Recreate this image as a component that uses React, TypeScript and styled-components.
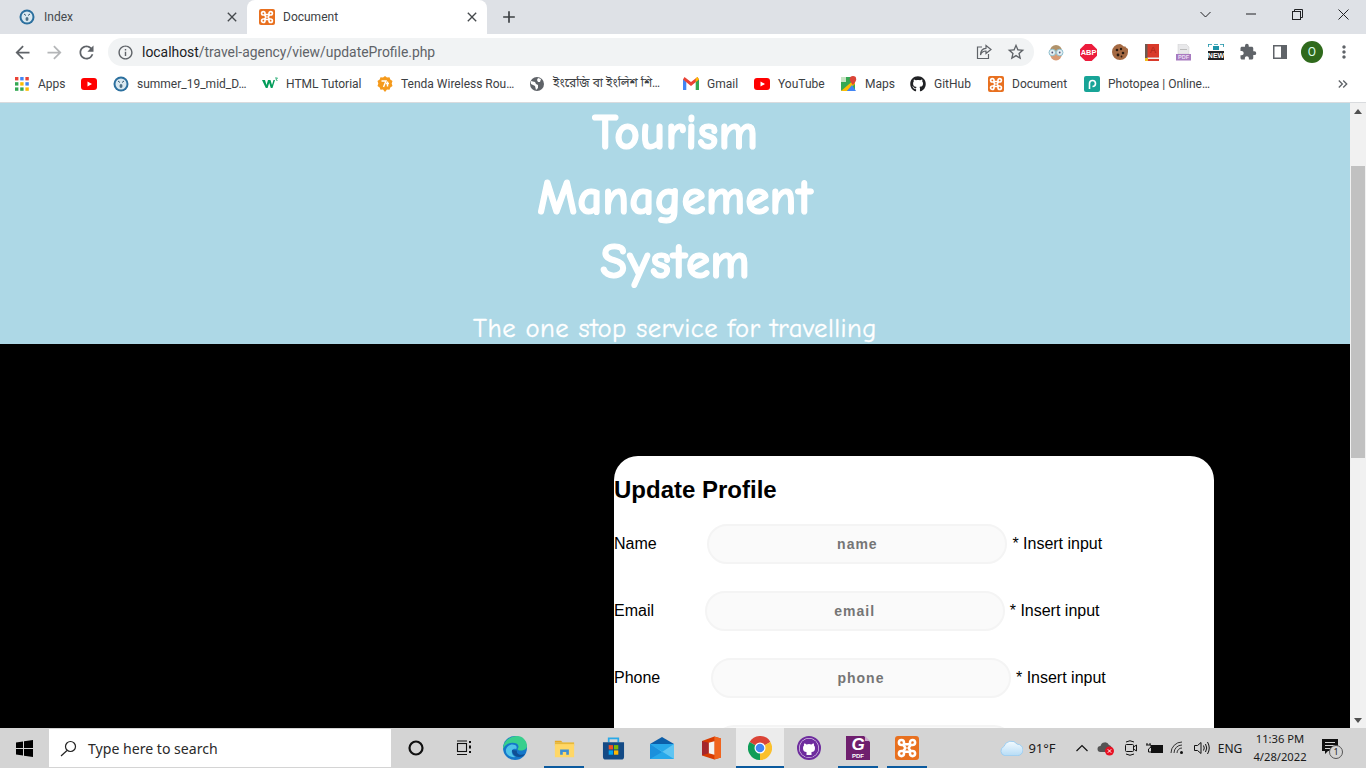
import React from "react";
import styled, { createGlobalStyle } from "styled-components";
import { MdArrowBack, MdArrowForward, MdRefresh, MdInfoOutline, MdStarBorder, MdExtension, MdClose, MdAdd, MdKeyboardDoubleArrowRight, MdMoreVert } from "react-icons/md";
import { FaGithub } from "react-icons/fa";

const UI = `Roboto, "Noto Sans", "Noto Sans Bengali", sans-serif`;
const COMIC = `"Comic Sans MS", "Comic Neue", Lato, sans-serif`;

const Global = createGlobalStyle`
  html, body { margin: 0; padding: 0; height: 100%; overflow: hidden; background: #000; }
  * { box-sizing: border-box; }
`;

const Screen = styled.div`
  width: 1366px; height: 768px; display: flex; flex-direction: column; overflow: hidden;
  font-family: ${UI};
`;

const TabStrip = styled.div`
  height: 34px; flex: none; background: #dee1e6; display: flex; align-items: stretch; padding-left: 7px;
`;
const Tab = styled.div<{ $active?: boolean }>`
  width: 240px; display: flex; align-items: center; font-size: 12px; color: ${p => p.$active ? "#3c4043" : "#45494d"};
  padding: 0 7px 0 12px; gap: ${p => p.$active ? 8 : 9}px;
  border-radius: 8px 8px 0 0; background: ${p => p.$active ? "#fff" : "transparent"};
`;
const TabTitle = styled.span`flex: 1; `;
const NewTab = styled.div`
  width: 44px; display: flex; align-items: center; justify-content: center; color: #3c4043; font-size: 20px;
`;
const WindowControls = styled.div`margin-left: auto; display: flex; padding-bottom: 6px;`;
const WindowButton = styled.div`
  width: 46px; display: flex; align-items: center; justify-content: center; color: #202124;
`;

const Toolbar = styled.div`
  height: 34px; flex: none; background: #fff; display: flex; align-items: center; padding: 2px 0 0 6px;
`;
const NavButton = styled.div<{ $off?: boolean }>`
  width: 32px; height: 32px; display: flex; align-items: center; justify-content: center; font-size: 21px;
  color: ${p => p.$off ? "#b4b6b8" : "#5f6368"};
`;
const Omnibox = styled.div`
  margin-left: 6px; margin-right: 6px; width: 926px; height: 28px; background: #f1f3f4; border-radius: 14px;
  display: flex; align-items: center; padding: 0 2px 0 9px; color: #5f6368; font-size: 13.9px;
`;
const UrlText = styled.div`
  margin-left: 8px; flex: 1; color: #5f6368; white-space: nowrap;
  b { font-weight: 400; color: #202124; }
`;
const OmniAction = styled.div`
  width: 32px; display: flex; justify-content: center; align-items: center; color: #5f6368; font-size: 20px;
`;
const ExtButton = styled.div`
  width: 32px; height: 32px; display: flex; align-items: center; justify-content: center; color: #5f6368;
`;
const Avatar = styled.div`
  width: 22px; height: 22px; border-radius: 50%; background: #2f6a1c; color: #dfe; font-size: 12px;
  display: flex; align-items: center; justify-content: center;
`;

const BookmarksBar = styled.div`
  height: 35px; flex: none; background: #fff; border-bottom: 1px solid #d9dbde; display: flex; align-items: center; padding: 0 0 3px 13px;
`;
const Bookmark = styled.div<{ $w: number }>`
  width: ${p => p.$w}px; display: flex; align-items: center; gap: 8px; font-size: 12px; color: #3c4043; white-space: nowrap; overflow: hidden;
`;
const BarOverflow = styled.div`
  margin-left: auto; width: 46px; display: flex; justify-content: center; color: #5f6368; font-size: 16px;
`;

const Viewport = styled.div`flex: 1; min-height: 0; display: flex;`;
const PageArea = styled.main`flex: 1; min-width: 0; background: #000; overflow: hidden;`;
const Banner = styled.header`
  height: 241px; background: #add8e6; color: #fff; text-align: center; font-family: ${COMIC}; overflow: hidden;
`;
const BannerTitle = styled.h1`
  margin: -2px 0 0; font-size: 49.5px; line-height: 64.5px; font-weight: 700; -webkit-text-stroke: 1.2px #fff;
`;
const BannerTag = styled.p`
  margin: 16px 0 0; font-size: 26.67px; line-height: 36px; font-weight: 400; letter-spacing: 0.5px; -webkit-text-stroke: 0.35px #fff;
`;
const Card = styled.section`
  margin: 112px 0 0 614px; width: 600px; min-height: 520px; background: #fff; border-radius: 24px 24px 0 0; font-family: "Liberation Sans", Arial, sans-serif; color: #000;
`;
const CardTitle = styled.h2`
  margin: 0; padding-top: 20px; font-size: 24px; line-height: 28px; font-weight: 700; height: 68px;
`;
const Row = styled.div<{ $indent?: number }>`
  display: flex; align-items: center; height: 40px; margin-bottom: 27px; font-size: 16px; padding-left: ${p => p.$indent ?? 0}px;
`;
const FieldLabel = styled.label`margin-right: 50.7px;`;
const Field = styled.input`
  width: 300px; height: 40px; border-radius: 20px; background: #fafafa; border: 2px solid #f4f4f4; text-align: center; outline: none; padding: 0;
  font: 700 14px "Liberation Sans", Arial, sans-serif; letter-spacing: 1px;
  &::placeholder { color: #757575; opacity: 1; }
`;
const Hint = styled.span`margin-left: 5px;`;

const Scrollbar = styled.div`
  width: 16px; flex: none; background: #f1f1f1; display: flex; flex-direction: column; align-items: center; 
`;
const ScrollArrow = styled.div`
  height: 16px; width: 16px; flex: none; display: flex; align-items: center; justify-content: center;
`;
const ScrollThumb = styled.div`
  width: 14px; height: 292px; background: #c1c1c1; margin-top: 47px; margin-bottom: auto;
`;

const Taskbar = styled.footer`
  height: 40px; flex: none; background: #d4d4d4; display: flex; align-items: stretch;
`;
const StartButton = styled.div`width: 49px; display: flex; align-items: center; justify-content: center;`;
const SearchBox = styled.div`
  width: 342px; height: 38px; margin-top: 1px; background: #fff; display: flex; align-items: center; padding-left: 11px; gap: 11px; font-size: 14.1px; color: #2a2a2a;
  font-family: "Noto Sans", sans-serif;
`;
const Pinned = styled.div`display: flex; gap: 1px; margin-left: 3px;`;
const TaskSlot = styled.div<{ $bar?: number; $active?: boolean; $ml?: number }>`
  width: 48px; position: relative; display: flex; align-items: center; justify-content: center; margin-left: ${p => p.$ml ?? 0}px;
  background: ${p => p.$active ? "#ececec" : "transparent"};
  &::after {
    content: ""; position: absolute; left: 50%; bottom: 0; height: 2px; transform: translateX(-50%);
    width: ${p => p.$bar ?? 0}px; background: #0b5a9e;
  }
`;
const Tray = styled.div`margin-left: auto; display: flex; align-items: stretch; padding-right: 15px; color: #1a1a1a;`;
const TraySlot = styled.div<{ $w: number; $size?: number }>`
  width: ${p => p.$w}px; display: flex; align-items: center; justify-content: center; font-size: ${p => p.$size ?? 12}px; font-family: "Noto Sans", sans-serif;
`;
const Clock = styled.div`
  text-align: center; font-size: 11.2px; line-height: 18.500px; font-family: "Noto Sans", sans-serif; white-space: nowrap;
`;

/* ---- drawings ---- */
const Xampp = ({ s = 16 }: { s?: number }) => (
  <svg width={s} height={s} viewBox="0 0 16 16">
    <rect width="16" height="16" rx="2" fill="#e8701f" />
    <path
      d="M6 5.500V4.300A1.700 1.700 0 1 0 4.300 6H5.500l1.500 2-1.500 2H4.300A1.700 1.700 0 1 0 6 11.700V10.500h4v1.200A1.700 1.700 0 1 0 11.700 10H10.500L9 8l1.500-2h1.200A1.700 1.700 0 1 0 10 4.300V5.500z"
      fill="none" stroke="#fff" strokeWidth="1.700" strokeLinejoin="round"
    />
  </svg>
);
const FaceGlobe = () => (
  <svg width="16" height="16" viewBox="0 0 16 16">
    <circle cx="8" cy="8" r="7.500" fill="#2b6f9e" />
    <circle cx="8" cy="8" r="5.500" fill="#d9e8f0" />
    <path d="M5 5l2 1.500M11 5L9 6.500" stroke="#33566e" strokeWidth="1" />
    <ellipse cx="8" cy="10" rx="1.500" ry="2" fill="#4f7186" />
  </svg>
);
const YouTube = () => (
  <svg width="16" height="12" viewBox="0 0 16 12">
    <rect width="16" height="12" rx="3" fill="#f00" />
    <path d="M6.500 3.500v5L11 6z" fill="#fff" />
  </svg>
);
const AppsGrid = () => {
  const c = ["#ea4335", "#4285f4", "#ea4335", "#34a853", "#fbbc04", "#4285f4", "#34a853", "#34a853", "#fbbc04"];
  return (
    <svg width="17" height="16" viewBox="0 0 17 16">
      {c.map((f, i) => <rect key={i} x={2 + (i % 3) * 5.200} y={1 + Math.floor(i / 3) * 5.200} width="3.400" height="3.400" fill={f} />)}
    </svg>
  );
};
const W3 = () => (
  <svg width="16" height="16" viewBox="0 0 16 16">
    <path d="M0 4h3l1.500 5L6 4h2.500l1.500 5 1.500-5H13l-2.500 8H8.800L7.200 7l-1.600 5H3.800z" fill="#049d5b" />
    <path d="M13 2h2.500L14 3.500q1.500.3 1 1.500" stroke="#049d5b" strokeWidth=".8" fill="none" />
  </svg>
);
const Tenda = () => (
  <svg width="16" height="16" viewBox="0 0 16 16">
    <path d="M8 0l2 1.500 2.500-.3.8 2.400 2.200 1.300-.8 2.600.8 2.600-2.200 1.300-.8 2.400-2.500-.3L8 16l-2-2.500-2.500.3-.8-2.400L.5 10.100l.8-2.600-.8-2.600 2.200-1.300.8-2.400 2.500.3z" fill="#f59a1c" />
    <path d="M4.500 5h4.500L6.500 11M9 7.500h3M10.500 5.500v5" stroke="#fff" strokeWidth="1.400" fill="none" />
  </svg>
);
const Globe = () => (
  <svg width="16" height="16" viewBox="0 0 16 16">
    <circle cx="8" cy="8" r="7" fill="#5f6368" />
    <path d="M2 5l4 1 1 2 2 1v3l-2 2-1-4-4-2zM9 2l3 1-1 3-2 0-1-2z" fill="#fff" />
  </svg>
);
const Gmail = () => (
  <svg width="16" height="13" viewBox="0 0 16 13">
    <path d="M0 2v11h3.300V4.500z" fill="#4285f4" />
    <path d="M16 2v11h-3.300V4.500z" fill="#34a853" />
    <path d="M0 2.500L1.500 0 8 5l6.500-5L16 2.500 8 9z" fill="#ea4335" />
    <path d="M12.700 1.300L14.500 0 16 2.500 12.700 5z" fill="#fbbc04" />
  </svg>
);
const Maps = () => (
  <svg width="16" height="16" viewBox="0 0 16 16">
    <rect y="1" width="14" height="14" rx="1" fill="#34a853" />
    <path d="M0 15L14 3v5L6 15z" fill="#fbbc04" />
    <path d="M6 15L11 9l4 6z" fill="#4285f4" />
    <rect y="1" width="5" height="5" fill="#c7e3c3" />
    <path d="M12 0a3.200 3.200 0 0 1 3.200 3.200C15.200 5.500 12 9 12 9S8.800 5.500 8.800 3.200A3.200 3.200 0 0 1 12 0z" fill="#db4437" />
  </svg>
);
const Photopea = () => (
  <svg width="16" height="16" viewBox="0 0 16 16">
    <rect width="16" height="16" rx="2" fill="#18a497" />
    <path d="M5.500 13V7.500a3 3 0 1 1 3 3" stroke="#fff" strokeWidth="1.600" fill="none" />
  </svg>
);
const ShareIcon = () => (
  <svg width="17" height="16" viewBox="0 0 17 16" fill="none" stroke="#5f6368" strokeWidth="1.200">
    <path d="M6 3H1.500v11.500h11V10" />
    <path d="M10 1.500l5 4-5 4V7C7.500 7 5.500 8 4.500 11c0-4 2-6.500 5.500-6.700z" />
  </svg>
);
const FaceExt = () => (
  <svg width="18" height="18" viewBox="0 0 18 18">
    <ellipse cx="9" cy="11" rx="6" ry="6.500" fill="#d99a74" />
    <path d="M3 8a6 6 0 0 1 12 0v1H3z" fill="#b0926a" />
    <circle cx="5.300" cy="9.500" r="3.300" fill="#e4eef2" stroke="#8fc0d0" />
    <circle cx="12.700" cy="9.500" r="3.300" fill="#e4eef2" stroke="#8fc0d0" />
    <circle cx="5.300" cy="9.500" r=".9" fill="#557" />
    <circle cx="12.700" cy="9.500" r=".9" fill="#557" />
  </svg>
);
const Abp = () => (
  <svg width="17" height="17" viewBox="0 0 16 16">
    <path d="M5 0h6l5 5v6l-5 5H5l-5-5V5z" fill="#ec1c3c" />
    <text x="8" y="10.800" textAnchor="middle" fontFamily="Liberation Sans" fontWeight="700" fontSize="7" fill="#fff">ABP</text>
  </svg>
);
const Cookie = () => (
  <svg width="16" height="16" viewBox="0 0 16 16">
    <path d="M8 0c1 0 1.500 1 2.500 1.200.5 1.300 2 1.500 3 1.300.3 1 1 1.500 2.500 2.500v3a8 8 0 1 1-8-8z" fill="#a56a43" />
    <g fill="#2b1a10"><circle cx="5" cy="6" r="1.300" /><circle cx="9" cy="5" r="1.200" /><circle cx="11" cy="9" r="1.300" /><circle cx="6" cy="11" r="1.400" /><circle cx="9.500" cy="12.500" r=".9" /></g>
  </svg>
);
const RedBook = () => (
  <svg width="16" height="17" viewBox="0 0 16 17">
    <rect x="1" width="14" height="17" fill="#d93a2b" />
    <rect x="1" width="2.500" height="17" fill="#6e5a50" />
    <rect x="3.500" y="13.500" width="11.500" height="1.500" fill="#eee" />
    <rect x="1" y="14" width="3" height="3" fill="#f0c020" />
    <text x="9" y="9" textAnchor="middle" fontSize="9" fontFamily="Liberation Sans" fill="#a82418">A</text>
  </svg>
);
const PdfExt = () => (
  <svg width="16" height="17" viewBox="0 0 16 17">
    <path d="M2 0h8l3 3v7H2z" fill="#e8e8ea" stroke="#ccc" strokeWidth=".5" />
    <rect x="4" y="5" width="7" height="1" fill="#bbb" />
    <rect y="10" width="15" height="6.500" fill="#a77bc0" />
    <text x="7.500" y="15.300" textAnchor="middle" fontSize="5.500" fontWeight="700" fontFamily="Liberation Sans" fill="#ecdff4">PDF</text>
  </svg>
);
const NewBadge = () => (
  <svg width="16" height="16" viewBox="0 0 16 16">
    <path d="M0 0h4M6 0h4M12 0h4M0 0v3M16 0v3" stroke="#1c93a8" strokeWidth="1.600" fill="none" />
    <rect x="5" y="2" width="6" height="4" fill="#1c93a8" />
    <rect y="7" width="16" height="9" fill="#202124" />
    <text x="8" y="14.300" textAnchor="middle" fontSize="7" fontWeight="700" fontFamily="Liberation Sans" fill="#fff">NEW</text>
  </svg>
);
const SidePanel = () => (
  <svg width="14" height="14" viewBox="0 0 14 14">
    <path fillRule="evenodd" d="M0 0h14v14H0zM1.500 1.500v11H8v-11z" fill="#5f6368" />
  </svg>
);
const Minimize = () => <svg width="10" height="10" viewBox="0 0 10 10"><path d="M0 5h10" stroke="#202124" /></svg>;
const Restore = () => (
  <svg width="11" height="11" viewBox="0 0 11 11" fill="none" stroke="#202124"><rect x=".5" y="2.500" width="8" height="8" /><path d="M2.500 2.500V.5h8v8h-2" /></svg>
);
const CloseX = () => <svg width="11" height="11" viewBox="0 0 11 11"><path d="M.5.5l10 10M10.500.5l-10 10" stroke="#202124" /></svg>;
const Chevron = () => <svg width="11" height="7" viewBox="0 0 11 7"><path d="M.5 1l5 5 5-5" fill="none" stroke="#202124" /></svg>;
const ScrollTri = ({ down }: { down?: boolean }) => (
  <svg width="8" height="5" viewBox="0 0 8 5"><path d={down ? "M0 0h8L4 5z" : "M0 5h8L4 0z"} fill="#505050" /></svg>
);
const WinLogo = () => (
  <svg width="17" height="17" viewBox="0 0 17 17"><path d="M0 2.500l7-1V8H0zM8 1.300L17 0v8H8zM0 9h7v6.500l-7-1zM8 9h9v8l-9-1.300z" fill="#000" /></svg>
);
const Magnifier = () => (
  <svg width="17" height="17" viewBox="0 0 17 17" fill="none" stroke="#222" strokeWidth="1.200"><circle cx="10.500" cy="6.500" r="5" /><path d="M7 10.500L1 16" /></svg>
);
const CortanaRing = () => <svg width="16" height="16" viewBox="0 0 16 16"><circle cx="8" cy="8" r="6.500" fill="none" stroke="#111" strokeWidth="2.200" /></svg>;
const TaskView = () => (
  <svg width="16" height="16" viewBox="0 0 16 16" fill="none" stroke="#111" strokeWidth="1.100"><rect x="1.500" y="3.500" width="9" height="8" /><path d="M1 1h10M1 14.500h10" /><path d="M14 1v2M14 5.500v3M14 11v2" strokeWidth="2" /></svg>
);
const Edge = () => (
  <svg width="24" height="24" viewBox="0 0 24 24">
    <circle cx="12" cy="12" r="12" fill="#1577c9" />
    <path d="M0 11C2 3 9 0 14 0c6 0 10 5 10 10 0 3-3 4.500-6 4.500-2 0-3-.5-3.500-1.500 1.500-1 1.500-4-1-5.500C9 5.500 3 7 0 13z" fill="#38cf8d" />
    <path d="M9 14c0 4 3 7 7 7 3 0 5-1 6-3-5 2-9 0-8-3.500z" fill="#0f4f94" />
    <path d="M3 13.500C4 9 9 7.500 12 9c2 1 2 3 1 4-2-1-5 0-4 4 .5 2 2 3.500 4 4-6 1-11-3-10-7.500z" fill="#4fc3e8" />
  </svg>
);
const Folder = () => (
  <svg width="21" height="19" viewBox="0 0 24 20">
    <path d="M1 1h7l2 2h-9z" fill="#e8a820" />
    <rect x="1" y="3" width="22" height="4" fill="#e8b93a" />
    <rect x="1" y="5" width="22" height="15" fill="#ffd766" />
    <path d="M7 11h10v6h-3v-3h-4v3H7z" fill="#3f8fd2" />
  </svg>
);
const Store = () => (
  <svg width="23" height="24" viewBox="0 0 24 24">
    <path d="M7 6V2h10v4" fill="none" stroke="#29a9e8" strokeWidth="1.800" />
    <path d="M1 6h22v15a3 3 0 0 1-3 3H4a3 3 0 0 1-3-3z" fill="#134a85" />
    <rect x="7" y="9" width="4.500" height="4.500" fill="#f25022" />
    <rect x="12.500" y="9" width="4.500" height="4.500" fill="#7fba00" />
    <rect x="7" y="14.500" width="4.500" height="4.500" fill="#00a4ef" />
    <rect x="12.500" y="14.500" width="4.500" height="4.500" fill="#ffb900" />
  </svg>
);
const Mail = () => (
  <svg width="24" height="22" viewBox="0 0 24 22">
    <path d="M0 7L12 0l12 7-12 8z" fill="#0c5ea8" />
    <rect y="7" width="24" height="15" fill="#28a8ea" />
    <path d="M0 7l12 8 12-8v15z" fill="#60c5f2" />
    <path d="M0 22V7l12 8z" fill="#1b90dc" />
  </svg>
);
const Office = () => (
  <svg width="19" height="24" viewBox="0 0 20 24">
    <path d="M0 4.500L13 0l7 2v20l-7 2-13-4z" fill="#d83b01" />
    <path d="M13 0l7 2v20l-7 2z" fill="#f0641e" />
    <path d="M7 6.500l6-1.500v14l-6-1.500z" fill="#f3f3f3" />
    <path d="M0 4.500L7 6.500v11l-7 2z" fill="#a4262c" />
  </svg>
);
const Chrome = () => (
  <svg width="24" height="24" viewBox="0 0 24 24">
    <path d="M12 12L1.600 6A12 12 0 0 1 22.400 6z" fill="#db4437" />
    <path d="M12 12L22.400 6A12 12 0 0 1 12 24z" fill="#fbc02d" />
    <path d="M12 12v12A12 12 0 0 1 1.600 6z" fill="#0f9d58" />
    <circle cx="12" cy="12" r="5.500" fill="#fff" />
    <circle cx="12" cy="12" r="4.300" fill="#4285f4" />
  </svg>
);
const GithubTask = () => (
  <svg width="24" height="24" viewBox="0 0 24 24">
    <circle cx="12" cy="12" r="11" fill="#fff" stroke="#6e2c9e" strokeWidth="2" />
    <circle cx="12" cy="12" r="9.500" fill="#6e2c9e" />
    <path d="M9.500 19v-3c-2.500 0-3.500-1.500-3.500-4 0-1 .3-1.800 1-2.400-.2-.8 0-1.700.2-2.100 1 0 1.800.6 2.300 1a8 8 0 0 1 5 0c.5-.4 1.300-1 2.300-1 .2.400.4 1.300.2 2.100.7.600 1 1.400 1 2.400 0 2.500-1 4-3.500 4v3z" fill="#fff" />
  </svg>
);
const PdfTask = () => (
  <svg width="24" height="24" viewBox="0 0 24 24">
    <path d="M0 0h18l6 6v18H0z" fill="#6f1f6e" />
    <path d="M19 0l5 5h-5z" fill="#c8a8cc" />
    <text x="12" y="14" textAnchor="middle" fontSize="17" fontStyle="italic" fontWeight="700" fontFamily="Liberation Sans" fill="#fff">G</text>
    <text x="12" y="22" textAnchor="middle" fontSize="6" fontWeight="700" fontFamily="Liberation Sans" fill="#fff">PDF</text>
  </svg>
);
const WeatherCloud = () => (
  <svg width="23" height="16" viewBox="0 0 24 16">
    <defs>
      <linearGradient id="cloudFill" x1="0" y1="0" x2="0" y2="1"><stop offset="0" stopColor="#f4fbff" /><stop offset="1" stopColor="#b6dcf6" /></linearGradient>
    </defs>
    <path d="M5 16a5 5 0 0 1-1-9.500A8 8 0 0 1 18 4a6 6 0 0 1 0 12z" fill="url(#cloudFill)" stroke="#9ccdf0" />
  </svg>
);
const Caret = () => <svg width="12" height="8" viewBox="0 0 12 8"><path d="M.5 7L6 1.500 11.500 7" fill="none" stroke="#111" strokeWidth="1.200" /></svg>;
const CloudError = () => (
  <svg width="18" height="16" viewBox="0 0 18 16">
    <path d="M3.500 12a3 3 0 0 1 0-6 4.500 4.500 0 0 1 8.500-1 3.500 3.500 0 0 1 2 5.500L12 12z" fill="#555" />
    <circle cx="12.500" cy="11" r="4.500" fill="#e81123" />
    <path d="M10.800 9.300l3.400 3.400M14.200 9.300l-3.400 3.400" stroke="#fff" />
  </svg>
);
const CameraTray = () => (
  <svg width="16" height="18" viewBox="0 0 16 18" fill="none" stroke="#111"><rect x="2.500" y="5.500" width="8" height="7" rx="1" /><path d="M10.500 8l3-2v6l-3-2M3 3q4-2.500 8 0M3 15q4 2.500 8 0" /></svg>
);
const BatteryPlug = () => (
  <svg width="18" height="14" viewBox="0 0 18 14"><rect x="5.500" y="4.500" width="11" height="7" fill="#111" stroke="#111" /><path d="M1 2v2M4 2v2M0 4h5v2L2.500 8v3H5" stroke="#111" fill="none" /></svg>
);
const Wifi = () => (
  <svg width="16" height="14" viewBox="0 0 16 14" fill="none" stroke="#333"><path d="M1 12A11 11 0 0 1 12 1M4 12A8 8 0 0 1 12 4M7 12A5 5 0 0 1 12 7" /><circle cx="11.500" cy="11.500" r="1.500" fill="#111" stroke="none" /></svg>
);
const Speaker = () => (
  <svg width="16" height="14" viewBox="0 0 16 14" fill="none" stroke="#111"><path d="M.5 4.500h3L7 1.500v11L3.500 9.500h-3zM9.500 4.500q1.500 2.500 0 5M11.500 3q2.500 4 0 8M13.500 1q3.500 6 0 12" /></svg>
);
const Notification = () => (
  <svg width="24" height="24" viewBox="0 0 24 24">
    <path d="M2 3h16v12H8l-3 3v-3H2z" fill="#111" />
    <path d="M5 6.500h10M5 9.500h10M5 12.500h6" stroke="#d4d4d4" />
    <circle cx="16" cy="16" r="6.500" fill="#d4d4d4" stroke="#555" />
    <text x="16" y="19" textAnchor="middle" fontSize="9" fontFamily="Noto Sans" fill="#222">1</text>
  </svg>
);

const bookmarks: [number, React.ReactNode, string][] = [
  [68, <AppsGrid />, "Apps"],
  [32, <YouTube />, ""],
  [149, <FaceGlobe />, "summer_19_mid_D…"],
  [115, <W3 />, "HTML Tutorial"],
  [152, <Tenda />, "Tenda Wireless Rou…"],
  [154, <Globe />, "ইংরেজি বা ইংলিশ শি…"],
  [71, <Gmail />, "Gmail"],
  [87, <YouTube />, "YouTube"],
  [69, <Maps />, "Maps"],
  [78, <FaGithub size={16} color="#202124" />, "GitHub"],
  [96, <Xampp />, "Document"],
  [130, <Photopea />, "Photopea | Online…"],
];

const fields = [
  { label: "Name", ph: "name" },
  { label: "Email", ph: "email" },
  { label: "Phone", ph: "phone" },
];

export default function App() {
  return (
    <Screen>
      <Global />
      <TabStrip>
        <Tab>
          <FaceGlobe />
          <TabTitle>Index</TabTitle>
          <MdClose size={16} color="#45494d" />
        </Tab>
        <Tab $active>
          <Xampp />
          <TabTitle>Document</TabTitle>
          <MdClose size={16} color="#45494d" />
        </Tab>
        <NewTab><MdAdd /></NewTab>
        <WindowControls>
          <WindowButton><Chevron /></WindowButton>
          <WindowButton><Minimize /></WindowButton>
          <WindowButton><Restore /></WindowButton>
          <WindowButton><CloseX /></WindowButton>
        </WindowControls>
      </TabStrip>
      <Toolbar>
        <NavButton><MdArrowBack /></NavButton>
        <NavButton $off><MdArrowForward /></NavButton>
        <NavButton><MdRefresh /></NavButton>
        <Omnibox>
          <MdInfoOutline size={17} color="#5f6368" />
          <UrlText><b>localhost</b>/travel-agency/view/updateProfile.php</UrlText>
          <OmniAction><ShareIcon /></OmniAction>
          <OmniAction><MdStarBorder /></OmniAction>
        </Omnibox>
        <ExtButton><FaceExt /></ExtButton>
        <ExtButton><Abp /></ExtButton>
        <ExtButton><Cookie /></ExtButton>
        <ExtButton><RedBook /></ExtButton>
        <ExtButton><PdfExt /></ExtButton>
        <ExtButton><NewBadge /></ExtButton>
        <ExtButton><MdExtension size={18} /></ExtButton>
        <ExtButton><SidePanel /></ExtButton>
        <ExtButton><Avatar>O</Avatar></ExtButton>
        <ExtButton><MdMoreVert size={20} /></ExtButton>
      </Toolbar>
      <BookmarksBar>
        {bookmarks.map(([w, icon, text], i) => (
          <Bookmark key={i} $w={w}>{icon}{text && <span>{text}</span>}</Bookmark>
        ))}
        <BarOverflow><MdKeyboardDoubleArrowRight /></BarOverflow>
      </BookmarksBar>
      <Viewport>
        <PageArea>
          <Banner>
            <BannerTitle>Tourism<br />Management<br />System</BannerTitle>
            <BannerTag>The one stop service for travelling</BannerTag>
          </Banner>
          <Card>
            <CardTitle>Update Profile</CardTitle>
            {fields.map(f => (
              <Row key={f.ph}>
                <FieldLabel>{f.label}</FieldLabel>
                <Field placeholder={f.ph} readOnly />
                <Hint>* Insert input</Hint>
              </Row>
            ))}
            <Row $indent={100}><Field readOnly /></Row>
          </Card>
        </PageArea>
        <Scrollbar>
          <ScrollArrow><ScrollTri /></ScrollArrow>
          <ScrollThumb />
          <ScrollArrow><ScrollTri down /></ScrollArrow>
        </Scrollbar>
      </Viewport>
      <Taskbar>
        <StartButton><WinLogo /></StartButton>
        <SearchBox><Magnifier /><span>Type here to search</span></SearchBox>
        <TaskSlot $ml={1}><CortanaRing /></TaskSlot>
        <TaskSlot><TaskView /></TaskSlot>
        <Pinned>
          <TaskSlot><Edge /></TaskSlot>
          <TaskSlot $bar={40}><Folder /></TaskSlot>
          <TaskSlot><Store /></TaskSlot>
          <TaskSlot><Mail /></TaskSlot>
          <TaskSlot><Office /></TaskSlot>
          <TaskSlot $active $bar={48}><Chrome /></TaskSlot>
          <TaskSlot><GithubTask /></TaskSlot>
          <TaskSlot $bar={40}><PdfTask /></TaskSlot>
          <TaskSlot $bar={40}><Xampp s={24} /></TaskSlot>
        </Pinned>
        <Tray>
          <TraySlot $w={28}><WeatherCloud /></TraySlot>
          <TraySlot $w={34} $size={13}><span>91°F</span></TraySlot>
          <TraySlot $w={11} />
          <TraySlot $w={24}><Caret /></TraySlot>
          <TraySlot $w={24}><CloudError /></TraySlot>
          <TraySlot $w={25}><CameraTray /></TraySlot>
          <TraySlot $w={23}><BatteryPlug /></TraySlot>
          <TraySlot $w={24}><Wifi /></TraySlot>
          <TraySlot $w={23}><Speaker /></TraySlot>
          <TraySlot $w={34}><span>ENG</span></TraySlot>
          <TraySlot $w={66}><Clock>11:36 PM<br />4/28/2022</Clock></TraySlot>
          <TraySlot $w={38}><Notification /></TraySlot>
        </Tray>
      </Taskbar>
    </Screen>
  );
}
